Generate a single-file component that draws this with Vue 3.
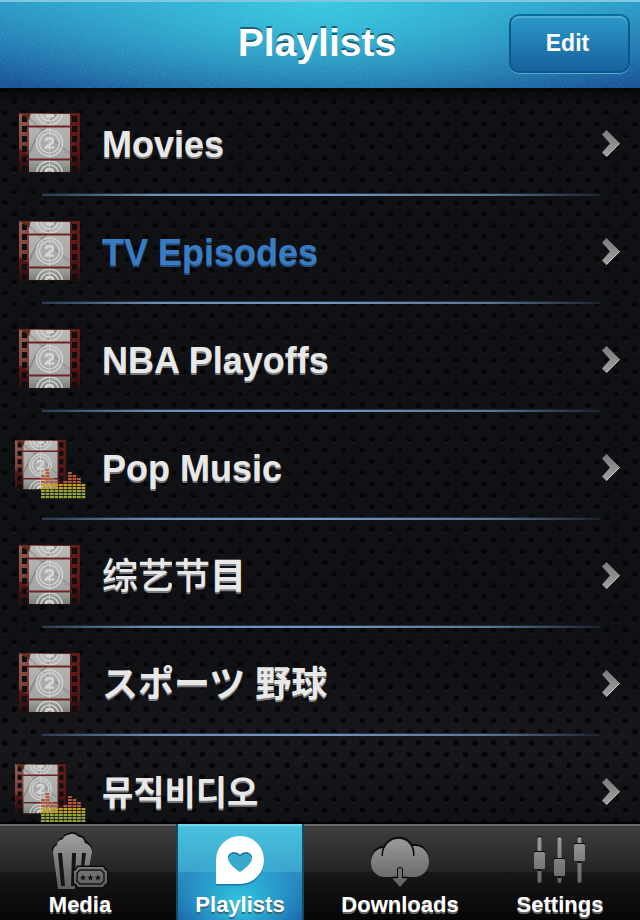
<template>
  <div class="app">
    <svg class="defs" width="0" height="0" aria-hidden="true">
      <defs>
        <linearGradient id="frameRed" x1="0" y1="0" x2="1" y2="0.6">
          <stop offset="0" stop-color="#93665c" />
          <stop offset="0.25" stop-color="#84433c" />
          <stop offset="0.6" stop-color="#5e2116" />
          <stop offset="1" stop-color="#5c1418" />
        </linearGradient>
        <linearGradient id="frameShade" x1="0" y1="0" x2="0" y2="1">
          <stop offset="0.6" stop-color="#1a0d0a" stop-opacity="0" />
          <stop offset="1" stop-color="#1a0d0a" stop-opacity="0.8" />
        </linearGradient>
        <linearGradient id="paper" x1="0" y1="0" x2="0" y2="1">
          <stop offset="0" stop-color="#b9bab8" />
          <stop offset="0.8" stop-color="#a0a4a0" />
          <stop offset="1" stop-color="#7c807b" />
        </linearGradient>
        <linearGradient id="arrowGrey" x1="0" y1="0" x2="0" y2="1">
          <stop offset="0" stop-color="#7a7a7a" />
          <stop offset="1" stop-color="#a0a0a0" />
        </linearGradient>
        <linearGradient id="iconGrey" gradientUnits="userSpaceOnUse" x1="0" y1="0" x2="0" y2="58">
          <stop offset="0" stop-color="#a2a2a2" />
          <stop offset="1" stop-color="#5c5c5c" />
        </linearGradient>
        <clipPath id="filmClip"><rect x="10" y="1" width="41" height="58" /></clipPath>
        <symbol id="film" viewBox="0 0 61 60">
          <rect width="61" height="60" fill="url(#frameRed)" />
          <path d="M0 36L10 42V60H0Z" fill="#5a1014" opacity="0.8" />
          <rect width="61" height="60" fill="url(#frameShade)" />
          <g fill="#0f0f12">
            <template v-for="n in 6" :key="n">
              <rect x="3" :y="n * 10 - 7" width="5" height="6" />
              <rect x="53" :y="n * 10 - 7" width="5" height="6" />
            </template>
          </g>
          <rect x="10" y="1" width="41" height="58" fill="url(#paper)" />
          <g clip-path="url(#filmClip)">
            <path d="M38 0L18 24L10 40" stroke="#777" stroke-width="2" fill="none" opacity="0.6" />
            <path d="M10 5L24 18L50 40" stroke="#777" stroke-width="2" fill="none" opacity="0.4" />
            <g fill="none" stroke="#d0d1ce" stroke-width="1.5">
              <circle cx="30.5" cy="30" r="13" />
              <circle cx="30.5" cy="30" r="10" />
              <circle cx="30.5" cy="-1" r="13" />
              <circle cx="30.5" cy="-1" r="9" />
              <circle cx="30.5" cy="61" r="13" />
              <circle cx="30.5" cy="61" r="9" />
              <path d="M30.5 0V60" stroke-width="0.8" />
            </g>
            <g fill="none" stroke="#d6d7d4" stroke-width="2.6">
              <path d="M27 28C27 24 34 24 34 28C34 31 28 32 27 34.5H35" />
              <path d="M27 59C27 55 34 55 34 59" />
              <path d="M27 3H35" />
            </g>
          </g>
          <path d="M8 13.5H53M8 46.5H53" stroke="#6d2324" stroke-width="2" />
          <path d="M0 0H12L10 7Z" fill="#5b2010" opacity="0.8" />
        </symbol>
      </defs>
    </svg>

    <header class="header">
      <svg class="grain" aria-hidden="true">
        <filter id="noise">
          <feTurbulence type="fractalNoise" baseFrequency="0.45" numOctaves="2" />
          <feColorMatrix values="0 0 0 0 0.6  0 0 0 0 0.85  0 0 0 0 1  1.6 0 0 0 -0.7" />
        </filter>
        <rect width="100%" height="100%" filter="url(#noise)" />
      </svg>
      <h1 class="title">Playlists</h1>
      <button type="button" class="edit-btn">Edit</button>
    </header>

    <main class="list-wrap">
      <svg class="dots" aria-hidden="true">
        <pattern id="holes" y="-3" width="18.8" height="22.5" patternUnits="userSpaceOnUse">
          <circle cx="5" cy="6.4" r="2.9" fill="#212227" />
          <circle cx="5" cy="5.6" r="3" fill="#060607" />
          <circle cx="14.4" cy="17.7" r="2.9" fill="#212227" />
          <circle cx="14.4" cy="16.9" r="3" fill="#060607" />
        </pattern>
        <rect width="100%" height="100%" fill="url(#holes)" />
      </svg>
      <ul class="list">
        <li v-for="item in playlists" :key="item.name">
          <a href="#" class="row" :class="{ selected: item.selected }">
            <svg class="thumb" viewBox="0 0 72 62" aria-hidden="true">
              <use v-if="!item.music" href="#film" x="4" y="0" width="61" height="60" />
              <template v-else>
                <use href="#film" x="0" y="3" width="51" height="50" />
                <template v-for="(count, i) in levels" :key="i">
                  <rect
                    v-for="n in count"
                    :key="n"
                    :x="26 + i * 4.5"
                    :y="62 - n * 3"
                    width="3.8"
                    height="2.2"
                    :fill="barColor(n)"
                  />
                </template>
              </template>
            </svg>
            <span class="name" :class="item.lang" :lang="item.lang">{{ item.name }}<b v-if="item.tail">{{ item.tail }}</b></span>
            <svg class="chevron" viewBox="0 0 18 28" aria-hidden="true">
              <path d="M0 4.5L4.5 0L18 13.5L4.5 27L0 22.5L8 13.5Z" fill="url(#arrowGrey)" />
              <path d="M4.5 26.5L17.5 13.5" stroke="#c4c4c4" stroke-width="1" />
            </svg>
          </a>
          <div class="separator"></div>
        </li>
      </ul>
    </main>

    <nav class="tabbar">
      <a href="#" class="tab">
        <svg viewBox="0 0 60 60" aria-hidden="true">
          <path d="M2 19C2 14 5 13 7 11C8 7 11 6 13 5C15 1 19 1 21 0C25 0 27 1 29 3C33 3 35 6 36 9C40 11 43 15 42 20Z" fill="#0c0c0c" />
          <path d="M3 20C3 16 5 14 7 13C7 9 10 8 13 7C14 3 18 3 21 2C25 1 27 4 29 5C33 5 34 8 35 11C39 12 42 16 42 20L39 36H25V57H8Z" fill="url(#iconGrey)" />
          <path d="M8 21H12L15 54H11ZM22 21H26L25 54H21ZM32 21H36L34 36H31Z" fill="#151515" />
          <path d="M28 35H53Q54 38 57 39V51Q54 52 53 55H28Q27 52 24 51V39Q27 38 28 35Z" fill="url(#iconGrey)" stroke="#0e0e0e" stroke-width="3" paint-order="stroke" />
          <path d="M30 38H51L54 41V49L51 52H30L27 49V41Z" fill="none" stroke="#161616" stroke-width="1.5" />
          <g fill="#111">
            <path v-for="x in [33, 40.5, 48]" :key="x" :transform="`translate(${x} 45.5) scale(0.8)`" d="M0 -4L1 -1H4L1.6 1L2.5 4L0 2L-2.5 4L-1.6 1L-4 -1H-1Z" />
          </g>
        </svg>
        <span>Media</span>
      </a>
      <a href="#" class="tab active" aria-current="page">
        <svg viewBox="0 0 60 60" aria-hidden="true">
          <path d="M30 5.5A24 24 0 0 1 30 53.5H6V29.5A24 24 0 0 1 30 5.5Z" fill="#17679f" opacity="0.8" />
          <path d="M30 4A24 24 0 0 1 30 52H6V28A24 24 0 0 1 30 4Z" fill="#fff" />
          <path d="M30 40C24 36 18 31 18 26C18 20 26 18 30 23C34 18 42 20 42 26C42 31 36 36 30 40Z" fill="#3aa9cf" />
          <path d="M18 27C17 20 26 18 30 23C34 18 43 20 42 27C41 21 34 20 30 25C26 20 19 21 18 27Z" fill="#1d72a4" />
        </svg>
        <span>Playlists</span>
      </a>
      <a href="#" class="tab">
        <svg viewBox="0 0 60 60" aria-hidden="true">
          <path d="M13 14C5 14 1 21 1 29H20V14ZM44 12C52 11 59 18 59 27H40V12Z" fill="#0a0a0a" />
          <path d="M13 16C5 17 1 23 1 31C1 39 7 45 15 45H44C53 45 59 38 59 29C59 20 52 13 44 14Z" fill="url(#iconGrey)" />
          <path d="M12.5 24C12 0 45 -1 43.5 24" fill="none" stroke="#0c0c0c" stroke-width="2" />
          <path d="M13 24C13 2 43 1 43 23L42 30H14Z" fill="url(#iconGrey)" />
          <path d="M27 46V38Q27 35 30 35Q33 35 33 38V46Z" fill="#0c0c0c" />
          <path d="M28 38Q28 36 30 36Q32 36 32 38V46H38L30 55L22 46H28Z" fill="url(#iconGrey)" />
          <path d="M22 45.5H28M32 45.5H38" stroke="#0c0c0c" stroke-width="1.5" />
        </svg>
        <span>Downloads</span>
      </a>
      <a href="#" class="tab">
        <svg viewBox="0 0 60 60" aria-hidden="true">
          <g v-for="s in sliders" :key="s.x">
            <rect :x="s.x - 2" y="4" width="4" height="10" rx="2" fill="#0a0a0a" />
            <rect :x="s.x - 2" y="5" width="4" height="46" rx="2" fill="url(#iconGrey)" />
            <rect :x="s.x - 5.5" :y="s.y - 1" width="11" height="5" rx="1" fill="#0a0a0a" />
            <rect :x="s.x - 2" :y="s.y + 17" width="4" height="2" fill="#0a0a0a" />
            <rect :x="s.x - 5.5" :y="s.y" width="11" height="17" rx="1.5" fill="url(#iconGrey)" />
          </g>
        </svg>
        <span>Settings</span>
      </a>
    </nav>
  </div>
</template>

<script setup>
const playlists = [
  { name: 'Movies' },
  { name: 'TV Episodes', selected: true },
  { name: 'NBA Playoffs' },
  { name: 'Pop Music', music: true },
  { name: '综艺节', tail: '目', lang: 'zh' },
  { name: 'スポーツ 野球', lang: 'ja' },
  { name: '뮤직비디오', lang: 'ko', music: true },
]

const levels = [8, 10, 7, 6, 5, 6, 9, 8, 7, 5]

const barColor = (n) => {
  if (n <= 3) return '#93a541'
  if (n <= 5) return '#c0a424'
  return '#b9573c'
}

const sliders = [
  { x: 9.5, y: 20 },
  { x: 29.5, y: 27 },
  { x: 49.5, y: 12 },
]
</script>

<style>
body {
  margin: 0;
  background: #101115;
}
</style>

<style scoped>
.app {
  display: flex;
  flex-direction: column;
  height: 100vh;
  overflow: hidden;
  font-family: "Liberation Sans", Arial, "Noto Sans CJK SC", sans-serif;
  font-weight: bold;
}

.defs {
  position: absolute;
}

.header {
  position: relative;
  display: grid;
  grid-template-columns: 1fr auto 1fr;
  align-items: center;
  box-sizing: border-box;
  flex: none;
  height: 88px;
  padding: 0 10px 4px 4px;
  border-top: 2px solid #80c8e2;
  background:
    radial-gradient(ellipse 60% 150% at 50% 0, #3ac8df, rgba(58, 200, 223, 0)),
    linear-gradient(#2b94c6, #195598);
}

.grain {
  position: absolute;
  inset: 0;
  width: 100%;
  height: 100%;
  opacity: 0.12;
}

.title {
  position: relative;
  grid-column: 2;
  margin: 0;
  color: #fff;
  font-size: 39px;
  line-height: 44px;
  text-shadow: 0 -2px 0 #1d6078;
}

.edit-btn {
  position: relative;
  justify-self: end;
  width: 121px;
  height: 59px;
  padding: 0 4px 0 0;
  border: 2px solid #07598a;
  border-top-color: #036f9e;
  border-radius: 10px;
  background: linear-gradient(#2d98c8, #17619c);
  box-shadow: inset 0 2px 0 #52acd8, 0 1px 0 #5ba6d8;
  color: #fff;
  font-family: inherit;
  font-size: 23px;
  font-weight: bold;
  cursor: pointer;
}

.list-wrap {
  position: relative;
  flex: 1;
  min-height: 0;
  overflow: hidden;
  background: linear-gradient(#060608, #101115 14px, #101115 78%, #17171c 90%, #101115);
}

.dots {
  position: absolute;
  width: 100%;
  height: 100%;
}

.list {
  position: relative;
  margin: 0;
  padding: 0;
  list-style: none;
}

.row {
  display: flex;
  align-items: center;
  gap: 15px;
  padding: 25px 20px 18px 15px;
  color: #e8e8e8;
  font-size: 36px;
  line-height: 40px;
  text-decoration: none;
  text-shadow: 0 2px 0 #77787a;
}

.row.selected {
  color: #3a7cc4;
  text-shadow: 0 2px 0 #28527e;
}

.thumb {
  flex: none;
  width: 72px;
  height: 62px;
}

.name {
  flex: 1;
  padding-top: 2px;
}

.zh {
  font-family: "Liberation Sans", "Noto Sans CJK SC", sans-serif;
  font-weight: 500;
}

.ja {
  font-family: "Liberation Sans", "Noto Sans CJK JP", sans-serif;
}

.ko {
  font-family: "Liberation Sans", "Noto Sans CJK KR", sans-serif;
  font-size: 34px;
}

.chevron {
  flex: none;
  width: 18px;
  height: 28px;
}

.separator {
  height: 3px;
  margin: 0 40px 0 42px;
  background:
    linear-gradient(rgba(16, 17, 21, 0.7) 1px, transparent 1px),
    linear-gradient(90deg, #2b3a4e, #6d8db4 20%, #7395bf 50%, #5b7492 80%, #1c2330);
}

.tabbar {
  display: grid;
  grid-template-columns: repeat(4, 1fr);
  justify-items: center;
  flex: none;
  height: 96px;
  border-top: 2px solid #000;
  background: linear-gradient(#6a6a6a 2px, #3e3e3e 2px, #242424 50%, #171717 50%, #060606);
}

.tab {
  display: flex;
  flex-direction: column;
  align-items: center;
  box-sizing: border-box;
  width: 128px;
  padding-top: 8px;
  border: solid transparent;
  border-width: 0 2px;
  color: #fff;
  font-size: 22px;
  line-height: 26px;
  text-decoration: none;
  text-shadow: 0 2px 0 #666;
}

.tab svg {
  width: 60px;
  height: 60px;
}

.tab.active {
  border-color: #184a5c;
  background:
    linear-gradient(#74d8ea 2px, transparent 2px),
    radial-gradient(ellipse 64px 50px at 50% 82%, #2fc8e2, rgba(47, 200, 226, 0)),
    linear-gradient(#49c4de, #3ba3cd 50%, #2b8fc3 50%, #1b69ae);
  text-shadow: 0 2px 0 #3a6678;
}
</style>
